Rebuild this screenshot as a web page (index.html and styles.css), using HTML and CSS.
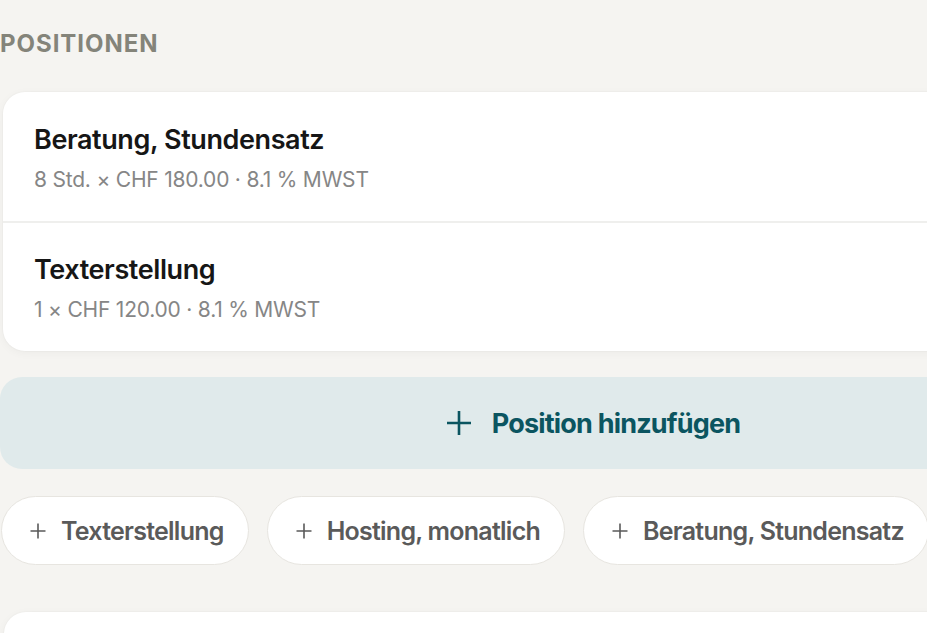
FILE: index.html
```html
<!DOCTYPE html>
<html lang="de">
<head>
<meta charset="utf-8">
<title>Positionen</title>
<link rel="stylesheet" href="styles.css">
</head>
<body>
<main class="page">
  <h2 class="section-title">POSITIONEN</h2>
  <section class="card">
    <div class="item">
      <div class="item-title">Beratung, Stundensatz</div>
      <div class="item-meta">8 Std. × CHF 180.00 · 8.1 % MWST</div>
    </div>
    <div class="item">
      <div class="item-title">Texterstellung</div>
      <div class="item-meta">1 × CHF 120.00 · 8.1 % MWST</div>
    </div>
  </section>
  <button class="add-btn" type="button">
    <svg class="add-icon" viewBox="0 0 24 24" width="24" height="24" aria-hidden="true"><path d="M12 0v24M0 12h24" stroke="currentColor" stroke-width="2.6" fill="none" stroke-linecap="butt"/></svg>
    <span>Position hinzufügen</span>
  </button>
  <div class="chips">
    <button class="chip" type="button"><svg class="chip-icon" viewBox="0 0 16 16" width="16" height="16" aria-hidden="true"><path d="M8 0.5v15M0.5 8h15" stroke="currentColor" stroke-width="1.6" fill="none"/></svg><span>Texterstellung</span></button>
    <button class="chip" type="button"><svg class="chip-icon" viewBox="0 0 16 16" width="16" height="16" aria-hidden="true"><path d="M8 0.5v15M0.5 8h15" stroke="currentColor" stroke-width="1.6" fill="none"/></svg><span>Hosting, monatlich</span></button>
    <button class="chip" type="button"><svg class="chip-icon" viewBox="0 0 16 16" width="16" height="16" aria-hidden="true"><path d="M8 0.5v15M0.5 8h15" stroke="currentColor" stroke-width="1.6" fill="none"/></svg><span>Beratung, Stundensatz</span></button>
  </div>
  <section class="card next-card"></section>
</main>
</body>
</html>
```

FILE: styles.css
```css
html, body {
  margin: 0;
  padding: 0;
  background: #f5f4f1;
  overflow: hidden;
  height: 633px;
}
body {
  font-family: Inter, "Noto Sans", sans-serif;
  color: #161616;
}
.page {
  width: 1186px;
  padding: 30px 0 0 1px;
  display: flex;
  flex-direction: column;
}
.section-title {
  margin: 0 0 0 -1px;
  font-size: 24px;
  line-height: 28px;
  font-weight: 700;
  letter-spacing: 0.04em;
  color: #84847a;
}
.card {
  margin-top: 34px;
  margin-left: 2px;
  background: #ffffff;
  border-radius: 22px;
  box-shadow: 0 2px 10px rgba(0, 0, 0, 0.04), 0 0 0 1px rgba(0, 0, 0, 0.015);
  display: flex;
  flex-direction: column;
}
.item {
  height: 129px;
  box-sizing: border-box;
  padding: 4px 31px 0;
  display: flex;
  flex-direction: column;
  justify-content: center;
  gap: 10px;
}
.item + .item {
  border-top: 2px solid #efefed;
  height: 130px;
}
.item-title {
  font-size: 27px;
  line-height: 32px;
  font-weight: 600;
  letter-spacing: -0.015em;
  color: #161616;
}
.item-meta {
  font-size: 21px;
  line-height: 28px;
  font-weight: 400;
  letter-spacing: -0.01em;
  color: #868686;
}
.add-btn {
  margin-top: 26px;
  margin-left: -1px;
  height: 92px;
  border: none;
  border-radius: 22px;
  background: #e0eaeb;
  color: #0b5560;
  font-family: inherit;
  font-size: 27px;
  font-weight: 700;
  letter-spacing: -0.03em;
  display: flex;
  align-items: center;
  justify-content: center;
  gap: 21px;
  padding: 0;
}
.add-icon {
  flex: none;
}
.chips {
  margin-top: 27px;
  display: flex;
  gap: 18px;
}
.chip {
  height: 69px;
  box-sizing: border-box;
  padding: 0 24px 0 28px;
  border: 1.5px solid #e7e5e0;
  border-radius: 35px;
  background: #ffffff;
  color: #5a5a5a;
  font-family: inherit;
  font-size: 25px;
  font-weight: 600;
  letter-spacing: -0.03em;
  display: flex;
  align-items: center;
  gap: 15px;
}
.chip-icon {
  flex: none;
}
.next-card {
  margin-top: 47px;
  margin-left: 3px;
  height: 120px;
}
```
